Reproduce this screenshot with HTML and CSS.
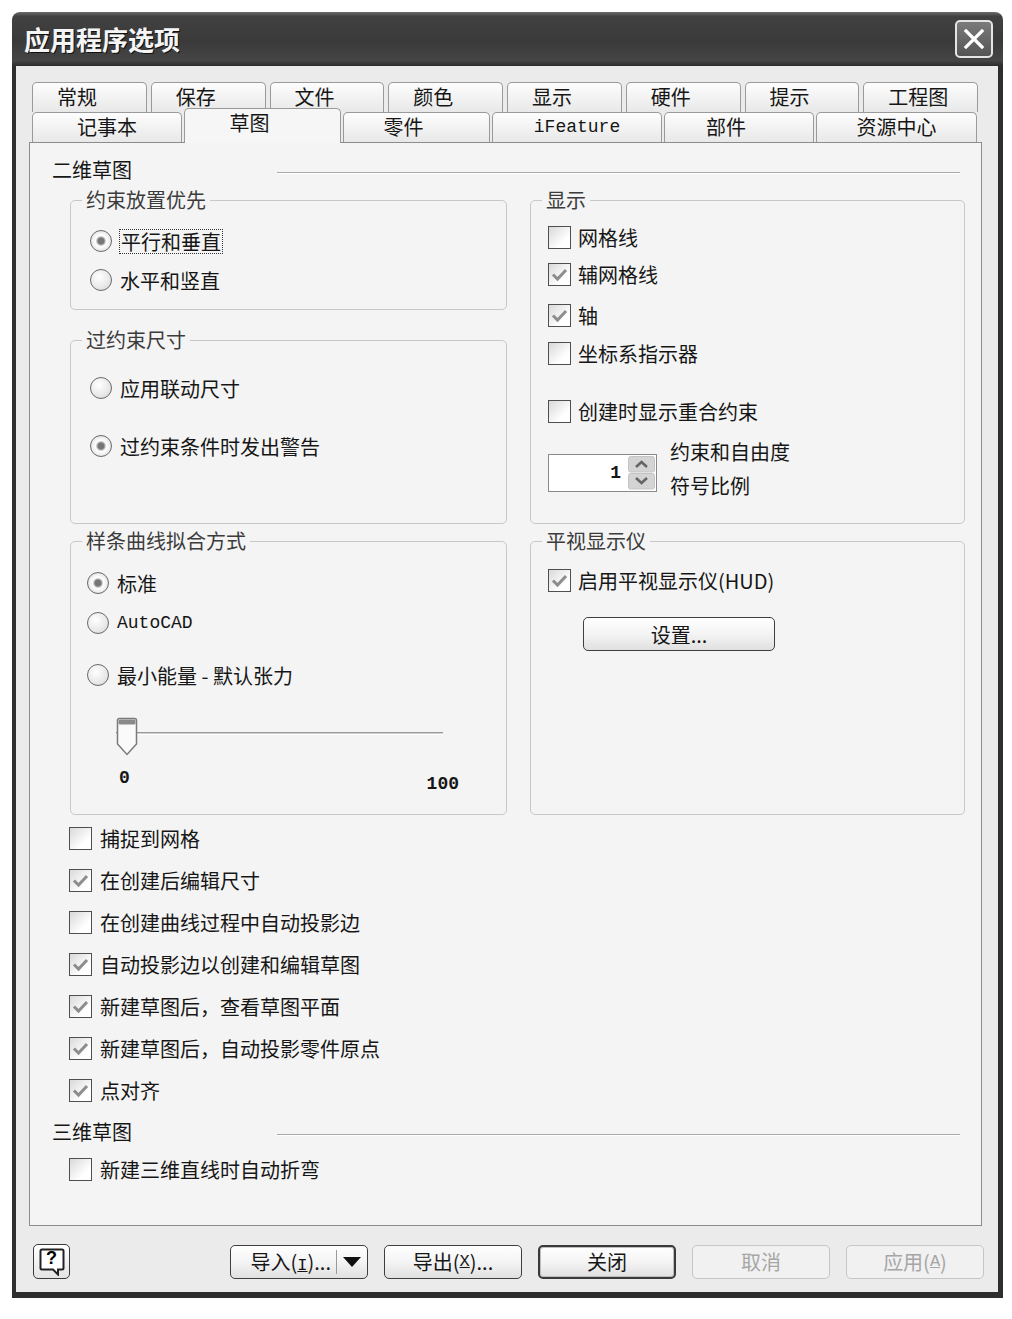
FILE: index.html
```html
<!DOCTYPE html>
<html lang="zh-CN">
<head>
  <meta charset="UTF-8" />
  <title>应用程序选项</title>
  <link rel="stylesheet" href="styles.css">
</head>
<body>
  <div class="window" role="dialog" aria-label="应用程序选项">
    <div class="titlebar">
      <span class="title">应用程序选项</span>
      <button class="close" aria-label="关闭">
        <svg width="22" height="22" viewBox="0 0 22 22"><path d="M3 3L19 19M19 3L3 19" stroke="#fff" stroke-width="3.2" stroke-linecap="square"/></svg>
      </button>
    </div>

    <div class="client">
      <div class="tabs">
        <div class="tab-row back">
          <span class="tab">常规</span>
          <span class="tab">保存</span>
          <span class="tab">文件</span>
          <span class="tab">颜色</span>
          <span class="tab">显示</span>
          <span class="tab">硬件</span>
          <span class="tab">提示</span>
          <span class="tab">工程图</span>
        </div>
        <div class="tab-row front">
          <span class="tab t-notes">记事本</span>
          <span class="tab t-sketch active">草图</span>
          <span class="tab t-part">零件</span>
          <span class="tab t-ifeature mono">iFeature</span>
          <span class="tab t-asm">部件</span>
          <span class="tab t-content">资源中心</span>
        </div>
      </div>

      <div class="panel">
        <div class="section">
          <span class="section-label">二维草图</span>
          <i class="rule"></i>
        </div>

        <div class="groups">
          <div class="stack">
            <fieldset class="group g-place">
              <legend>约束放置优先</legend>
              <div class="list">
                <label class="opt"><span class="radio on"></span><span class="focus">平行和垂直</span></label>
                <label class="opt"><span class="radio"></span>水平和竖直</label>
              </div>
            </fieldset>
            <fieldset class="group g-over">
              <legend>过约束尺寸</legend>
              <div class="list">
                <label class="opt"><span class="radio"></span>应用联动尺寸</label>
                <label class="opt"><span class="radio on"></span>过约束条件时发出警告</label>
              </div>
            </fieldset>
          </div>

          <fieldset class="group g-display">
            <legend>显示</legend>
            <div class="list">
              <label class="opt"><span class="box"></span>网格线</label>
              <label class="opt"><span class="box on"><svg width="17" height="15" viewBox="0 0 17 15"><path d="M2 7.5l4.5 4.5L15 3" fill="none" stroke="#8d8d8d" stroke-width="3"/></svg></span>辅网格线</label>
              <label class="opt r-axis"><span class="box on"><svg width="17" height="15" viewBox="0 0 17 15"><path d="M2 7.5l4.5 4.5L15 3" fill="none" stroke="#8d8d8d" stroke-width="3"/></svg></span>轴</label>
              <label class="opt r-coord"><span class="box"></span>坐标系指示器</label>
              <label class="opt r-overlap"><span class="box"></span>创建时显示重合约束</label>
              <div class="spin-row">
                <div class="spin">
                  <span class="spin-value mono">1</span>
                  <span class="spin-btns">
                    <svg width="27" height="34" viewBox="0 0 27 34">
                      <rect x="0.5" y="0.5" width="26" height="15.5" rx="2" fill="#d4d4d4" stroke="#c4c4c4"/>
                      <rect x="0.5" y="17.5" width="26" height="15.5" rx="2" fill="#d4d4d4" stroke="#c4c4c4"/>
                      <path d="M8 11l5.5-5 5.5 5" fill="none" stroke="#666" stroke-width="2.6"/>
                      <path d="M8 22l5.5 5 5.5-5" fill="none" stroke="#666" stroke-width="2.6"/>
                    </svg>
                  </span>
                </div>
                <div class="spin-label">约束和自由度<br>符号比例</div>
              </div>
            </div>
          </fieldset>

          <fieldset class="group g-spline">
            <legend>样条曲线拟合方式</legend>
            <div class="list">
              <label class="opt"><span class="radio on"></span>标准</label>
              <label class="opt"><span class="radio"></span><span class="mono">AutoCAD</span></label>
              <label class="opt r-min"><span class="radio"></span>最小能量 - 默认张力</label>
            </div>
            <div class="slider">
              <div class="track"></div>
              <svg class="thumb" width="22" height="40" viewBox="0 0 22 40">
                <path d="M1.5 3.5Q1.5 1.5 3.5 1.5H18.5Q20.5 1.5 20.5 3.5V27L11 37.5L1.5 27Z" fill="#fafafa" stroke="#7a7a7a" stroke-width="1.5"/>
                <rect x="2.5" y="2.5" width="17" height="5" rx="1.5" fill="#8a8a8a"/>
              </svg>
            </div>
            <div class="scale mono"><span>0</span><span class="max">100</span></div>
          </fieldset>

          <fieldset class="group g-hud">
            <legend>平视显示仪</legend>
            <label class="opt"><span class="box on"><svg width="17" height="15" viewBox="0 0 17 15"><path d="M2 7.5l4.5 4.5L15 3" fill="none" stroke="#8d8d8d" stroke-width="3"/></svg></span>启用平视显示仪(HUD)</label>
            <button class="btn btn-setup">设置...</button>
          </fieldset>
        </div>

        <div class="options">
          <label class="opt"><span class="box"></span>捕捉到网格</label>
          <label class="opt"><span class="box on"><svg width="17" height="15" viewBox="0 0 17 15"><path d="M2 7.5l4.5 4.5L15 3" fill="none" stroke="#8d8d8d" stroke-width="3"/></svg></span>在创建后编辑尺寸</label>
          <label class="opt"><span class="box"></span>在创建曲线过程中自动投影边</label>
          <label class="opt"><span class="box on"><svg width="17" height="15" viewBox="0 0 17 15"><path d="M2 7.5l4.5 4.5L15 3" fill="none" stroke="#8d8d8d" stroke-width="3"/></svg></span>自动投影边以创建和编辑草图</label>
          <label class="opt"><span class="box on"><svg width="17" height="15" viewBox="0 0 17 15"><path d="M2 7.5l4.5 4.5L15 3" fill="none" stroke="#8d8d8d" stroke-width="3"/></svg></span>新建草图后，查看草图平面</label>
          <label class="opt"><span class="box on"><svg width="17" height="15" viewBox="0 0 17 15"><path d="M2 7.5l4.5 4.5L15 3" fill="none" stroke="#8d8d8d" stroke-width="3"/></svg></span>新建草图后，自动投影零件原点</label>
          <label class="opt"><span class="box on"><svg width="17" height="15" viewBox="0 0 17 15"><path d="M2 7.5l4.5 4.5L15 3" fill="none" stroke="#8d8d8d" stroke-width="3"/></svg></span>点对齐</label>
        </div>

        <div class="section section-3d">
          <span class="section-label">三维草图</span>
          <i class="rule"></i>
        </div>
        <div class="options options-3d">
          <label class="opt"><span class="box"></span>新建三维直线时自动折弯</label>
        </div>
      </div>

      <div class="actions">
        <button class="help" aria-label="帮助">
          <svg width="26" height="28" viewBox="0 0 26 28">
            <path d="M3 1.5H23Q24.5 1.5 24.5 3V20Q24.5 21.5 23 21.5H19V26.5L14 21.5H3Q1.5 21.5 1.5 20V3Q1.5 1.5 3 1.5Z" fill="#fff" stroke="#222" stroke-width="2"/>
          </svg>
          <span class="help-mark">?</span>
        </button>
        <div class="btn-group">
          <button class="btn btn-import"><span>导入(<u class="mono">I</u>)...</span><i class="split"></i><svg width="20" height="12" viewBox="0 0 20 12"><path d="M1 1H19L10 11Z" fill="#111"/></svg></button>
          <button class="btn">导出(<u class="mono">X</u>)...</button>
          <button class="btn btn-default">关闭</button>
          <button class="btn" disabled>取消</button>
          <button class="btn" disabled>应用(<u class="mono">A</u>)</button>
        </div>
      </div>
    </div>
  </div>
</body>
</html>
```

FILE: styles.css
```css
* { box-sizing: border-box; }
body {
  margin: 0;
  background: #ffffff;
  font-family: "Noto Sans CJK SC", "Noto Sans", sans-serif;
  font-size: 20px;
  color: #161616;
}
.mono {
  font-family: "Liberation Mono", "DejaVu Sans Mono", monospace;
  font-size: 18px;
}
.window {
  width: 991px;
  margin: 12px 0 0 12px;
  display: flex;
  flex-direction: column;
}

/* title bar */
.titlebar {
  height: 54px;
  display: flex;
  align-items: center;
  justify-content: space-between;
  padding: 0 10px 0 12px;
  border-radius: 8px 8px 0 0;
  background: linear-gradient(#6c6c6c, #414141 8%, #3a3a3a 55%, #454545 90%, #2c2c2c);
}
.title {
  color: #f5f5f5;
  font-size: 26px;
  font-weight: 700;
  line-height: 1;
  text-shadow: 1px 1px 0 #111;
}
.close {
  width: 38px;
  height: 38px;
  padding: 0;
  border: 2px solid #e4e4e4;
  border-radius: 5px;
  background: linear-gradient(#7a7a7a, #555555);
  display: flex;
  align-items: center;
  justify-content: center;
}

/* client area */
.client {
  background: #ebebeb;
  border: solid #2e2e2e;
  border-width: 0 5px 6px 4px;
  padding: 16px 16px 13px 13px;
}
.tabs { padding: 0 4px 0 3px; }
.tab-row {
  display: flex;
  align-items: flex-end;
  gap: 4px;
  height: 30px;
}
.tab {
  flex: 1;
  height: 30px;
  border: 1px solid #9a9a9a;
  border-bottom: none;
  border-radius: 5px 5px 0 0;
  background: linear-gradient(#fdfdfd, #e8e8e8);
  line-height: 28px;
  padding-left: 24px;
  white-space: nowrap;
}
.tab-row.front { gap: 2px; }
.tab-row.front .tab {
  flex: none;
  padding: 0;
  text-align: center;
}
.t-notes { width: 150px; }
.t-sketch { width: 157px; }
.t-part { width: 147px; }
.t-ifeature { width: 170px; }
.t-asm { width: 150px; }
.t-content { width: 161px; }
.tab-row.front .t-sketch { padding-right: 26px; }
.tab-row.front .t-part,
.tab-row.front .t-asm { padding-right: 26px; }
.tab.active {
  height: 35px;
  margin-bottom: -1px;
  background: #f6f6f6;
  position: relative;
  z-index: 1;
}

.panel {
  height: 1084px;
  border: 1px solid #8c8c8c;
  background: #f4f4f4;
  padding: 15px 21px 0 22px;
}
.section {
  display: flex;
  align-items: center;
  height: 24px;
}
.section-label {
  width: 225px;
  line-height: 24px;
}
.rule {
  flex: 1;
  height: 2px;
  margin-top: 5px;
  border-top: 1px solid #ababab;
  border-bottom: 1px solid #ffffff;
}

/* group boxes */
.groups {
  display: grid;
  grid-template-columns: 437px 435px;
  grid-template-rows: 336px 286px;
  column-gap: 23px;
  row-gap: 5px;
  margin: 6px -5px 0 18px;
}
.stack {
  display: flex;
  flex-direction: column;
  gap: 18px;
}
.group {
  margin: 0;
  min-width: 0;
  border: 1px solid #c8c8c8;
  border-radius: 5px;
  padding: 0 16px;
}
.group legend {
  margin-left: -5px;
  padding: 0 4px;
  line-height: 24px;
  color: #3c3c3c;
}
.list {
  display: flex;
  flex-direction: column;
}
.opt {
  display: flex;
  align-items: center;
  gap: 8px;
  height: 24px;
  white-space: nowrap;
}
.radio {
  flex: none;
  width: 22px;
  height: 22px;
  border: 1px solid #6a6a6a;
  border-radius: 50%;
  background: radial-gradient(circle at 40% 35%, #ffffff, #e6e6e6 65%, #cfcfcf);
}
.radio.on {
  background: radial-gradient(circle, #767676 0 3px, #b8b8b8 4px, #ffffff 5.5px, #e8e8e8 70%, #d2d2d2);
}
.box {
  flex: none;
  width: 23px;
  height: 23px;
  border: 1px solid #4f4f4f;
  background: linear-gradient(135deg, #d9d9d9, #ffffff 70%);
  display: flex;
  align-items: center;
  justify-content: center;
}
.focus {
  outline: 1px dotted #333;
  padding: 0 1px;
  line-height: 23px;
}

.g-place { padding-top: 17px; padding-bottom: 17px; }
.g-place .list { gap: 15px; padding-left: 3px; }
.g-over { flex: 1; padding-top: 24px; }
.g-over .list { gap: 34px; padding-left: 3px; }

.g-display { padding-top: 13px; }
.g-display .list { gap: 13px; padding-left: 1px; }
.g-display .opt { gap: 7px; }
.g-display .r-axis { margin-top: 4px; }
.g-display .r-coord { margin-top: 1px; }
.g-display .r-overlap { margin-top: 21px; }
.spin-row {
  display: flex;
  align-items: center;
  gap: 13px;
  margin-top: -1px;
}
.spin {
  width: 109px;
  height: 38px;
  margin-top: 8px;
  border: 1px solid #8a8a8a;
  background: #ffffff;
  display: flex;
  align-items: center;
  justify-content: flex-end;
  padding-right: 1px;
}
.spin-value { margin-right: 7px; font-weight: 700; }
.spin-btns { display: flex; }
.spin-label { line-height: 34px; }

.g-spline { padding-top: 18px; }
.g-spline .list { gap: 16px; }
.g-spline .r-min { margin-top: 12px; }
.slider {
  position: relative;
  width: 327px;
  height: 40px;
  margin: 30px 0 0 29px;
  padding-top: 15px;
}
.track {
  height: 3px;
  border-top: 1px solid #9a9a9a;
  border-bottom: 1px solid #ffffff;
  background: #d0d0d0;
}
.thumb {
  position: absolute;
  left: 0;
  top: 0;
}
.scale {
  display: flex;
  justify-content: space-between;
  width: 340px;
  margin: 11px 0 0 32px;
  line-height: 20px;
  font-weight: 700;
}
.scale .max { margin-top: 6px; }

.g-hud { padding-top: 15px; }
.g-hud .opt { gap: 7px; margin-left: 1px; }

/* buttons */
.btn {
  display: flex;
  align-items: center;
  justify-content: center;
  width: 138px;
  height: 34px;
  padding: 0;
  border: 1px solid #3f3f3f;
  border-radius: 5px;
  background: linear-gradient(#ffffff, #f4f4f4 50%, #e0e0e0);
  font: inherit;
  color: #161616;
  white-space: nowrap;
}
.btn u { font-size: 17px; }
.btn:disabled {
  border-color: #c6c6c6;
  background: #f1f1f1;
  color: #a6a6a6;
}
.btn-default {
  border: 2px solid #3a3a3a;
  box-shadow: inset 0 0 0 1px #bdbdbd;
}
.btn-setup {
  width: 192px;
  margin: 25px 0 0 36px;
}
.btn-import {
  justify-content: flex-end;
  padding-right: 5px;
  gap: 5px;
}
.btn-import span { margin-left: -3px; }
.split {
  width: 1px;
  height: 24px;
  background: #9a9a9a;
}

.options {
  display: flex;
  flex-direction: column;
  gap: 18px;
  margin: 11px 0 0 17px;
}
.section-3d { margin-top: 18px; }
.options-3d { margin-top: 13px; }

.actions {
  display: flex;
  align-items: center;
  height: 35px;
  margin: 18px -2px 0 0;
  padding-left: 4px;
}
.help {
  position: relative;
  width: 37px;
  height: 35px;
  padding: 0;
  border: 1px solid #3a3a3a;
  border-radius: 5px;
  background: linear-gradient(#ffffff, #e4e4e4);
  display: flex;
  align-items: flex-start;
  justify-content: center;
  padding-top: 3px;
}
.help-mark {
  position: absolute;
  left: 0;
  right: 0;
  top: 2px;
  font-family: "Liberation Sans", sans-serif;
  font-weight: 700;
  font-size: 18px;
  line-height: 22px;
  text-align: center;
}
.btn-group {
  margin-left: auto;
  display: flex;
  gap: 16px;
}
```
